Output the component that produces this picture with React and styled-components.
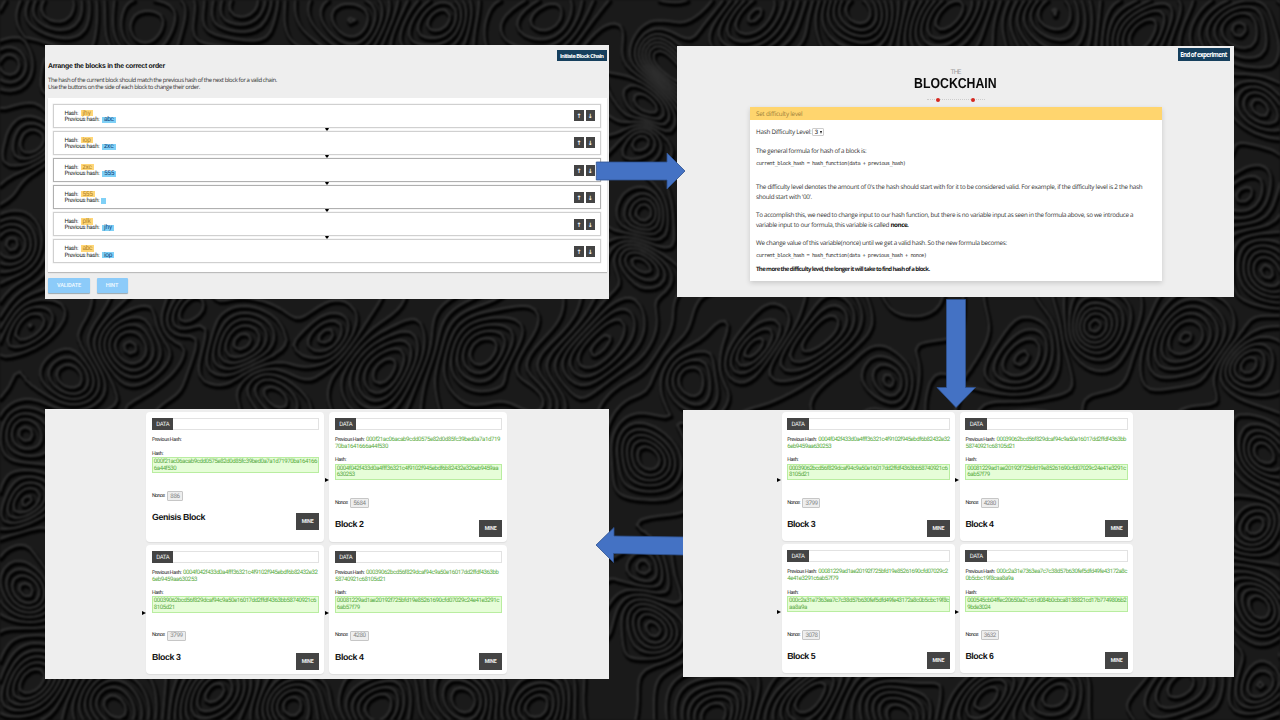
import React from "react";
import styled, { createGlobalStyle } from "styled-components";

const GlobalStyle = createGlobalStyle`
  * { box-sizing: border-box; }
  body { margin: 0; background: #141414; overflow: hidden; text-rendering: geometricPrecision; }
`;

const SANS = '"Open Sans", "Noto Sans", sans-serif';
const UI = "Roboto, sans-serif";
const ARIAL = '"Liberation Sans", Arial, sans-serif';
const MONO = '"DejaVu Sans Mono", monospace';

/* ---------- text set to a measured width ---------- */

const ctx = document.createElement("canvas").getContext("2d");
const spacing = (text, size, family, weight, width) => {
  if (!width) return 0;
  ctx.font = `${weight} ${size * 10}px ${family}`;
  return (width - ctx.measureText(text).width / 10) / text.length;
};

const TextSpan = styled.span`
  display: block;
  white-space: pre;
  font-family: ${(p) => p.$family};
  font-size: ${(p) => p.$size}px;
  font-weight: ${(p) => p.$weight};
  line-height: ${(p) => p.$lh}px;
  color: ${(p) => p.$color};
`;

function Text({ children, size = 6.2, family = UI, weight = 400, width, lh = 7, color = "#333" }) {
  return (
    <TextSpan
      $size={size}
      $family={family}
      $weight={weight}
      $lh={lh}
      $color={color}
      style={{ letterSpacing: `${spacing(children, size, family, weight, width)}px` }}
    >
      {children}
    </TextSpan>
  );
}

/* ---------- contour backdrop ---------- */

const HILLS = [
  [237, 353, 34, 1], [485, 347, 38, 1.2], [362, 10, 36, 1], [450, 30, 30, -0.9], [250, 12, 34, -0.8],
  [150, 20, 40, 0.9], [60, 15, 36, -1], [560, 10, 34, 0.9], [673, 68, 24, 1.2], [640, 120, 26, -0.9],
  [636, 150, 20, 0.8], [655, 225, 22, 0.9], [636, 275, 22, -0.9], [820, 345, 36, 1.1], [755, 345, 26, -0.9],
  [760, 15, 36, 1], [860, 20, 30, -0.9], [950, 10, 38, 1], [1060, 15, 34, -0.9], [1150, 22, 34, 1],
  [1250, 30, 34, -1], [1255, 110, 26, 1], [1258, 200, 30, -0.8], [1262, 275, 28, 1], [1255, 370, 26, -1],
  [1180, 345, 34, 0.9], [1090, 320, 26, -1], [1030, 370, 36, 1], [900, 375, 26, -0.8], [700, 375, 30, 0.9],
  [600, 350, 34, -1], [395, 365, 34, -0.9], [330, 330, 28, 0.9], [130, 340, 32, -1], [80, 385, 28, 1],
  [20, 335, 26, 0.9], [15, 250, 28, -1], [22, 150, 24, 1], [15, 70, 24, -0.8], [20, 440, 26, -0.9],
  [20, 510, 24, 1], [25, 600, 26, -1], [30, 690, 30, 1], [120, 705, 32, -0.9], [215, 700, 32, 1],
  [300, 705, 28, -0.9], [385, 700, 30, 1], [470, 705, 30, -0.9], [550, 700, 30, 1], [640, 640, 26, -1],
  [635, 470, 28, 1], [655, 580, 24, 0.8], [725, 705, 34, 1], [820, 700, 28, -0.9], [905, 705, 32, 1],
  [990, 700, 28, -1], [1065, 700, 32, 1], [1180, 695, 36, -1], [1255, 610, 28, 1], [1262, 530, 26, -0.9],
  [1255, 455, 26, 1], [1260, 690, 26, 0.9], [540, 395, 26, 0.7], [280, 395, 26, -0.8], [180, 310, 24, 0.8],
];

const field = (x, y) => {
  const u = x + 10 * Math.sin(y / 27) + 3 * Math.sin(y / 14 + x / 40);
  const v = y + 10 * Math.sin(x / 31) + 3 * Math.cos(x / 17);
  let s = 0.2 * Math.sin(x / 37 + y / 51) + 0.12 * Math.cos(x / 25 - y / 33);
  for (const [cx, cy, r, a] of HILLS) {
    const d = ((u - cx) ** 2 + (v - cy) ** 2) / (r * r);
    if (d < 9) s += a * Math.exp(-d);
  }
  return s;
};

const STEP = 5;
const buildContours = () => {
  const cols = 1280 / STEP + 1;
  const rows = 720 / STEP + 1;
  const g = [];
  for (let j = 0; j < rows; j++) for (let i = 0; i < cols; i++) g.push(field(i * STEP, j * STEP));
  const out = [];
  for (let level = -1.21; level < 1.3; level += 0.18) {
    for (let j = 0; j < rows - 1; j++) {
      for (let i = 0; i < cols - 1; i++) {
        const a = g[j * cols + i], b = g[j * cols + i + 1];
        const c = g[(j + 1) * cols + i + 1], d = g[(j + 1) * cols + i];
        const x = i * STEP, y = j * STEP, pts = [];
        const t = (p, q) => ((level - p) / (q - p)) * STEP;
        if (a < level !== b < level) pts.push([x + t(a, b), y]);
        if (b < level !== c < level) pts.push([x + STEP, y + t(b, c)]);
        if (d < level !== c < level) pts.push([x + t(d, c), y + STEP]);
        if (a < level !== d < level) pts.push([x, y + t(a, d)]);
        for (let k = 0; k + 1 < pts.length; k += 2) {
          out.push(`M${pts[k].map((n) => n.toFixed(1))}L${pts[k + 1].map((n) => n.toFixed(1))}`);
        }
      }
    }
  }
  return out.join("");
};
const CONTOURS = buildContours();

const Slide = styled.main`
  position: relative;
  width: 1280px;
  height: 720px;
  overflow: hidden;
  padding: 45px 46px 0 45px;
  display: flex;
  flex-direction: column;
  gap: 110px;
`;
const Backdrop = styled.svg`
  position: absolute;
  inset: 0;
  filter: blur(0.8px);
`;
const Arrows = styled.svg`
  position: absolute;
  inset: 0;
  pointer-events: none;
`;
const PanelRow = styled.div`
  position: relative;
  display: flex;
  justify-content: space-between;
  align-items: flex-start;
`;
const Panel = styled.section`
  width: ${(p) => p.$w}px;
  height: ${(p) => p.$h}px;
  margin-top: ${(p) => p.$top || 0}px;
  background: #eeeeee;
  overflow: hidden;
  display: flex;
  flex-direction: column;
`;

/* ---------- ordering panel ---------- */

const NavyButton = styled.button`
  align-self: flex-end;
  flex: none;
  width: ${(p) => p.$w}px;
  height: ${(p) => p.$h}px;
  margin: ${(p) => p.$margin};
  padding: 0;
  border: 0;
  background: #163f5d;
  display: flex;
  align-items: center;
  justify-content: center;
`;
const Intro = styled.div`
  display: flex;
  flex-direction: column;
  padding: 2.6px 0 0 3px;
  height: 37.8px;
`;
const Gap = styled.div`
  flex: none;
  height: ${(p) => p.$h}px;
`;
const ChainBox = styled.div`
  width: 559px;
  height: 173.5px;
  margin-left: 3px;
  padding: 5.5px 6px 0 5.3px;
  background: #fff;
  box-shadow: 0 1px 1px #bbb;
  display: flex;
  flex-direction: column;
  gap: 2.9px;
`;
const ChainRow = styled.div`
  position: relative;
  flex: none;
  height: 24.2px;
  border: 1px solid ${(p) => (p.$dark ? "#b0b0b0" : "#d0d0d0")};
  box-shadow: 0 0 0 0.5px #ececec;
  padding: 0 5px 0 10.2px;
  display: flex;
  align-items: center;
  justify-content: space-between;
`;
const Pair = styled.div`
  display: flex;
  flex-direction: column;
  padding-top: 1px;
`;
const PairLine = styled.div`
  display: flex;
  align-items: center;
  gap: ${(p) => p.$gap}px;
  height: 6.5px;
`;
const Tag = styled.span`
  width: ${(p) => p.$w}px;
  height: 6.2px;
  background: ${(p) => (p.$blue ? "#7fd0f6" : "#ffd677")};
  display: flex;
  align-items: center;
  justify-content: center;
`;
const Movers = styled.div`
  display: flex;
  gap: 2px;
`;
const Mover = styled.button`
  width: 9.3px;
  height: 11px;
  padding: 0;
  border: 0;
  background: #444;
  display: flex;
  align-items: center;
  justify-content: center;
`;
const DownMark = styled.i`
  position: absolute;
  left: 270.3px;
  bottom: -4.6px;
  border: 2.6px solid transparent;
  border-top: 4.2px solid #000;
  border-bottom: 0;
`;
const Actions = styled.div`
  display: flex;
  gap: 6.5px;
  padding: 6.5px 0 0 3px;
`;
const SkyButton = styled.button`
  width: ${(p) => p.$w}px;
  height: 15.2px;
  padding: 0;
  border: 0;
  border-radius: 1px;
  background: #8ccbf9;
  box-shadow: 0 1px 1px #9aa8b0;
  display: flex;
  align-items: center;
  justify-content: center;
`;

const CHAIN = [
  ["jhy", 12.3, "abc", 13.7], ["iop", 12.3, "zxc", 13.5], ["zxc", 13.4, "555", 14],
  ["555", 14, "", 5.4], ["plk", 12.3, "jhy", 12], ["abc", 13.5, "iop", 12.3],
];

function OrderPanel() {
  return (
    <Panel $w={564} $h={254}>
      <NavyButton $w={49.5} $h={10.5} $margin="5px 2.5px 0 0">
        <Text size={6} weight={700} width={43.5} color="#fff">Initiate Block Chain</Text>
      </NavyButton>
      <Intro>
        <Text size={6.9} family={ARIAL} weight={700} width={117} color="#111" lh={7}>Arrange the blocks in the correct order</Text>
        <Gap $h={7} />
        <Text size={6} family={SANS} width={229}>The hash of the current block should match the previous hash of the next block for a valid chain.</Text>
        <Text size={6} family={SANS} width={152}>Use the buttons on the side of each block to change their order.</Text>
      </Intro>
      <ChainBox>
        {CHAIN.map(([hash, w1, prev, w2], i) => (
          <ChainRow key={i} $dark={i === 2 || i === 3}>
            <Pair>
              <PairLine $gap={2.5}>
                <Text size={6} width={13.5} color="#222">Hash:</Text>
                <Tag $w={w1}><Text size={6.6} width={w1 - 4} color="#b08226">{hash}</Text></Tag>
              </PairLine>
              <PairLine $gap={prev ? 2.5 : 1}>
                <Text size={6} width={35} color="#222">Previous hash:</Text>
                <Tag $blue $w={w2}><Text size={6.6} width={w2 - 4} color="#12427c">{prev}</Text></Tag>
              </PairLine>
            </Pair>
            <Movers>
              <Mover><Text size={6} family={'"DejaVu Sans", sans-serif'} weight={700} color="#fff">↑</Text></Mover>
              <Mover><Text size={6} family={'"DejaVu Sans", sans-serif'} weight={700} color="#fff">↓</Text></Mover>
            </Movers>
            {i < 5 && <DownMark />}
          </ChainRow>
        ))}
      </ChainBox>
      <Actions>
        <SkyButton $w={42}><Text size={5.6} weight={500} width={24} color="#f4fbff">VALIDATE</Text></SkyButton>
        <SkyButton $w={31}><Text size={5.6} weight={500} width={12.5} color="#f4fbff">HINT</Text></SkyButton>
      </Actions>
    </Panel>
  );
}

/* ---------- difficulty panel ---------- */

const Brand = styled.div`
  display: flex;
  flex-direction: column;
  align-items: center;
  height: 45.5px;
  padding-top: 7.5px;
`;
const Wordmark = styled.h1`
  margin: 0;
  font: 700 14.4px/16px ${ARIAL};
  color: #0a0a0a;
  transform: scaleX(0.853);
`;
const Rule = styled.div`
  width: 58px;
  margin-top: 7.5px;
  border-top: 1px dotted #ccc;
  display: flex;
  justify-content: space-between;
  padding: 0 9.5px;
`;
const Dot = styled.i`
  width: 4px;
  height: 4px;
  margin-top: -2.5px;
  border-radius: 50%;
  background: #d5281f;
`;
const Card = styled.article`
  width: 411.5px;
  height: 174.5px;
  margin-left: 73px;
  background: #fff;
  box-shadow: 0 2px 5px rgba(0, 0, 0, 0.16);
  display: flex;
  flex-direction: column;
`;
const CardHead = styled.header`
  flex: none;
  height: 13.3px;
  padding-left: 6px;
  background: #ffd56e;
  display: flex;
  align-items: center;
`;
const CardBody = styled.div`
  display: flex;
  flex-direction: column;
  padding: 7.5px 0 0 6px;
`;
const Line = styled.div`
  display: flex;
  align-items: center;
  height: 9.4px;
  margin-bottom: ${(p) => p.$after || 0}px;
`;
const Select = styled.span`
  width: 12px;
  height: 7.8px;
  margin-left: 1px;
  padding-top: 0.6px;
  border: 1px solid #ccc;
  border-radius: 1px;
  display: flex;
  align-items: center;
  justify-content: space-around;
`;
const Caret = styled.i`
  border: 1.8px solid transparent;
  border-top: 3.2px solid #111;
  border-bottom: 0;
`;

function DifficultyPanel() {
  const t = { size: 6.3, family: SANS, color: "#333" };
  return (
    <Panel $w={557} $h={251} $top={1}>
      <NavyButton $w={52} $h={13} $margin="2px 4.5px 0 0">
        <Text size={6.1} family={SANS} weight={700} width={46.5} color="#fff">End of experiment</Text>
      </NavyButton>
      <Brand>
        <Text size={6.8} width={10} color="#a0a0a0">THE</Text>
        <Wordmark>BLOCKCHAIN</Wordmark>
        <Rule><Dot /><Dot /></Rule>
      </Brand>
      <Card>
        <CardHead><Text size={6.3} family={SANS} width={46.5} color="#9b7f3c">Set difficulty level</Text></CardHead>
        <CardBody>
          <Line $after={9.4}>
            <Text {...t} width={55.5}>Hash Difficulty Level:</Text>
            <Select><Text size={6} color="#222">3</Text><Caret /></Select>
          </Line>
          <Line $after={4.4}><Text {...t} width={110.5}>The general formula for hash of a block is:</Text></Line>
          <Line $after={12.8}><Text size={5.3} family={MONO} width={149.5}>current_block_hash = hash_function(data + previous_hash)</Text></Line>
          <Line><Text {...t} width={386.5}>The difficulty level denotes the amount of 0's the hash should start with for it to be considered valid. For example, if the difficulty level is 2 the hash</Text></Line>
          <Line $after={9.2}><Text {...t} width={56}>should start with '00'.</Text></Line>
          <Line><Text {...t} width={377.5}>To accomplish this, we need to change input to our hash function, but there is no variable input as seen in the formula above, so we introduce a</Text></Line>
          <Line $after={9.2}>
            <Text {...t} width={134.5}>variable input to our formula, this variable is called </Text>
            <Text {...t} weight={700} width={18} color="#111">nonce.</Text>
          </Line>
          <Line $after={4.6}><Text {...t} width={251}>We change value of this variable(nonce) until we get a valid hash. So the new formula becomes:</Text></Line>
          <Line $after={3.8}><Text size={5.3} family={MONO} width={170.5}>current_block_hash = hash_function(data + previous_hash + nonce)</Text></Line>
          <Line><Text size={6} family={SANS} weight={700} width={173.5} color="#1c1c1c">The more the difficulty level, the longer it will take to find hash of a block.</Text></Line>
        </CardBody>
      </Card>
    </Panel>
  );
}

/* ---------- mined block grids ---------- */

const Grid = styled.div`
  display: grid;
  grid-template-columns: repeat(2, ${(p) => p.$cell}px);
  gap: ${(p) => p.$gap};
  padding: ${(p) => p.$pad};
`;
const BlockCard = styled.article`
  position: relative;
  height: ${(p) => p.$h}px;
  padding: 6px 5.5px 0 5.7px;
  border-radius: 4px;
  background: #fff;
  box-shadow: 0 1px 1px #ddd;
  display: flex;
  flex-direction: column;
`;
const DataBar = styled.div`
  flex: none;
  height: 12px;
  border: 1px solid #e2e2e2;
  display: flex;
`;
const DataLabel = styled.span`
  width: 21.5px;
  margin: -1px 0 -1px -1px;
  padding-top: 1.2px;
  background: #444;
  display: flex;
  align-items: center;
  justify-content: center;
`;
const PrevHash = styled.div`
  display: flex;
  flex-direction: column;
  margin-top: 7.3px;
  margin-bottom: 6.6px;
`;
const HashLine = styled.div`
  display: flex;
  align-items: center;
  gap: 1.8px;
  height: 6.8px;
`;
const HashBox = styled.div`
  height: 16.4px;
  margin-top: -0.7px;
  padding: 1px 0 0 0.8px;
  border: 1px solid #b9eda0;
  background: #e6fdd8;
`;
const NonceLine = styled.div`
  display: flex;
  align-items: center;
  gap: 2.5px;
  height: 10px;
  margin-top: 18.3px;
`;
const NonceBox = styled.span`
  width: ${(p) => p.$w}px;
  height: 10px;
  border: 1px solid #c6c6c6;
  border-radius: 1px;
  background: #eee;
  display: flex;
  align-items: center;
  justify-content: center;
`;
const BlockFoot = styled.div`
  display: flex;
  justify-content: space-between;
  align-items: flex-start;
  margin-top: 12px;
`;
const MineButton = styled.button`
  width: 22.4px;
  height: 16.7px;
  padding: 0;
  border: 0;
  background: #444;
  display: flex;
  align-items: center;
  justify-content: center;
`;
const SideMark = styled.i`
  position: absolute;
  left: -4.4px;
  top: 66px;
  border: 2.3px solid transparent;
  border-left: 4px solid #000;
  border-right: 0;
`;

const GREEN = "#58ab42";
const H1 = ["000f21ac06acab9cdd0575e82d0d85fc39bed0a7a1d719", "70ba1641666a44f530"];
const B1 = ["000f21ac06acab9cdd0575e82d0d85fc39bed0a7a1d71970ba164166", "6a44f530"];
const P3 = ["0004f042f433d0a4fff36321c4f9102f945ebdf6b82432e32", "6eb9459aa630253"];
const B2 = ["0004f042f433d0a4fff36321c4f9102f945ebdf6b82432e326eb9459aa", "630253"];
const P4 = ["00039062bcd56f829dcaf94c9a50e16017dd2ffdf4363bb", "58740921c68105d21"];
const B3 = ["00039062bcd56f829dcaf94c9a50e16017dd2ffdf4363bb58740921c6", "8105d21"];
const P5 = ["00081229ad1ae20192f725bfd19e85261690cfd07029c2", "4e41e3291c6ab57f79"];
const B4 = ["00081229ad1ae20192f725bfd19e85261690cfd07029c24e41e3291c", "6ab57f79"];
const P6 = ["000c2a31e7363ea7c7c38d57b630fef5dfd49fe43172a8c", "0b5cbc19f8caa8a9a"];
const B5 = ["000c2a31e7363ea7c7c38d57b630fef5dfd49fe43172a8c0b5cbc19f8c", "aa8a9a"];
const B6 = ["000545cb04ffec20650a21c61d084b0cbca8138821cd17b7749806b2", "9bde3024"];

/* Each hash line carries its rendered width. */
const LEFT = [
  { title: "Genisis Block", tw: 53, prev: null, hash: B1, hw: [163.5, 22.5], nonce: "886", nw: 15.5 },
  { title: "Block 2", tw: 28.5, prev: H1, pw: [134, 53], hash: B2, hw: [161.5, 18], nonce: "5684", nw: 18.5, mark: true },
  { title: "Block 3", tw: 28.5, prev: P3, pw: [134.5, 45], hash: B3, hw: [162.5, 21], nonce: "3799", nw: 18.5, mark: true },
  { title: "Block 4", tw: 28.5, prev: P4, pw: [132.5, 50.5], hash: B4, hw: [162.5, 23], nonce: "4280", nw: 18.5, mark: true },
];
const RIGHT = [
  { title: "Block 3", tw: 28, prev: P3, pw: [131.5, 44], hash: B3, hw: [158.5, 20.5], nonce: "3799", nw: 18, mark: true },
  { title: "Block 4", tw: 28, prev: P4, pw: [129.5, 49.5], hash: B4, hw: [158.5, 22.5], nonce: "4280", nw: 18, mark: true },
  { title: "Block 5", tw: 28, prev: P5, pw: [129.5, 51], hash: B5, hw: [160, 18], nonce: "3078", nw: 18, mark: true },
  { title: "Block 6", tw: 28, prev: P6, pw: [130.5, 48], hash: B6, hw: [159, 23], nonce: "3632", nw: 18, mark: true },
];

function Block({ b, h }) {
  const g = { size: 6.1, color: GREEN, lh: 6.8 };
  return (
    <BlockCard $h={h}>
      <DataBar>
        <DataLabel><Text size={6} width={13} color="#f2f2f2">DATA</Text></DataLabel>
      </DataBar>
      <PrevHash>
        <HashLine>
          <Text size={5.2} width={29.4} color="#1a1a1a">Previous Hash:</Text>
          {b.prev && <Text {...g} width={b.pw[0]}>{b.prev[0]}</Text>}
        </HashLine>
        {b.prev && <HashLine><Text {...g} width={b.pw[1]}>{b.prev[1]}</Text></HashLine>}
      </PrevHash>
      <HashLine><Text size={5.2} width={11} color="#1a1a1a">Hash:</Text></HashLine>
      <HashBox>
        <HashLine><Text {...g} width={b.hw[0]}>{b.hash[0]}</Text></HashLine>
        <HashLine><Text {...g} width={b.hw[1]}>{b.hash[1]}</Text></HashLine>
      </HashBox>
      <NonceLine>
        <Text size={5.2} width={12.8} color="#1a1a1a">Nonce:</Text>
        <NonceBox $w={b.nw}><Text size={6.2} width={b.nw - 6} color="#858585">{b.nonce}</Text></NonceBox>
      </NonceLine>
      <BlockFoot>
        <Text size={8.8} family={ARIAL} weight={700} width={b.tw} lh={9} color="#111">{b.title}</Text>
        <MineButton><Text size={5.2} weight={700} width={11.5} color="#eee">MINE</Text></MineButton>
      </BlockFoot>
      {b.mark && <SideMark />}
    </BlockCard>
  );
}

export default function App() {
  return (
    <>
      <GlobalStyle />
      <Slide>
        <Backdrop width="1280" height="720" viewBox="0 0 1280 720" fill="none" strokeLinecap="round">
          <rect width="1280" height="720" fill="#1a1a1a" />
          <path d={CONTOURS} stroke="#020202" strokeWidth="4.6" transform="translate(1.2 2.4)" />
          <path d={CONTOURS} stroke="#363636" strokeWidth="2" />
        </Backdrop>
        <PanelRow>
          <OrderPanel />
          <DifficultyPanel />
        </PanelRow>
        <PanelRow>
          <Panel $w={564} $h={270}>
            <Grid $cell={178} $gap="3px 5px" $pad="3px 0 0 101.3px">
              {LEFT.map((b, i) => <Block key={i} b={b} h={129.7} />)}
            </Grid>
          </Panel>
          <Panel $w={551} $h={267} $top={1}>
            <Grid $cell={173.5} $gap="3.2px 4.8px" $pad="2px 0 0 98.5px">
              {RIGHT.map((b, i) => <Block key={i} b={b} h={129} />)}
            </Grid>
          </Panel>
        </PanelRow>
        <Arrows width="1280" height="720" viewBox="0 0 1280 720">
          <g fill="#4472c4" stroke="#2f528f" strokeWidth="0.8">
            <path d="M596.3 162H667V153L685 171L667 189V180H596.3Z" />
            <path d="M946.5 299.5H965.5V387.5H975.5L956 407.5L937 387.5H946.5Z" />
            <path d="M683 555L613.5 553.5V562.5L596 545L614 527.5V536L683 537" />
          </g>
        </Arrows>
      </Slide>
    </>
  );
}
